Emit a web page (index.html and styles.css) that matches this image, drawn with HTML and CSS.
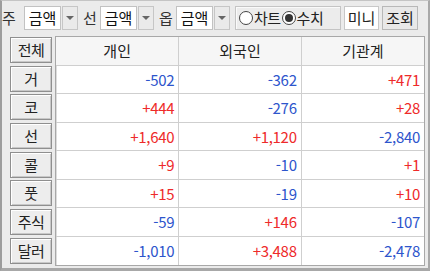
FILE: index.html
```html
<!DOCTYPE html>
<html lang="ko">
<head>
<meta charset="utf-8">
<link rel="stylesheet" href="styles.css">
</head>
<body>
<div class="win">
  <div class="toolbar">
    <span class="lbl first">주</span>
    <span class="combo"><span class="val">금액</span><span class="drop"><i></i></span></span>
    <span class="lbl">선</span>
    <span class="combo"><span class="val">금액</span><span class="drop"><i></i></span></span>
    <span class="lbl">옵</span>
    <span class="combo"><span class="val">금액</span><span class="drop"><i></i></span></span>
    <span class="radios">
      <span class="radio"></span><span class="rtext">차트</span>
      <span class="radio on"></span><span class="rtext">수치</span>
    </span>
    <span class="btn white">미니</span>
    <span class="btn">조회</span>
  </div>
  <div class="main">
    <div class="side">
      <span class="sbtn">전체</span>
      <span class="sbtn">거</span>
      <span class="sbtn">코</span>
      <span class="sbtn">선</span>
      <span class="sbtn">콜</span>
      <span class="sbtn">풋</span>
      <span class="sbtn">주식</span>
      <span class="sbtn">달러</span>
    </div>
    <div class="grid">
      <div class="row head"><span>개인</span><span>외국인</span><span>기관계</span></div>
      <div class="row"><span class="dn">-502</span><span class="dn">-362</span><span class="up">+471</span></div>
      <div class="row"><span class="up">+444</span><span class="dn">-276</span><span class="up">+28</span></div>
      <div class="row"><span class="up">+1,640</span><span class="up">+1,120</span><span class="dn">-2,840</span></div>
      <div class="row"><span class="up">+9</span><span class="dn">-10</span><span class="up">+1</span></div>
      <div class="row"><span class="up">+15</span><span class="dn">-19</span><span class="up">+10</span></div>
      <div class="row"><span class="dn">-59</span><span class="up">+146</span><span class="dn">-107</span></div>
      <div class="row"><span class="dn">-1,010</span><span class="up">+3,488</span><span class="dn">-2,478</span></div>
    </div>
  </div>
</div>
</body>
</html>
```
FILE: styles.css
```css
* { box-sizing: border-box; }
html, body { margin: 0; padding: 0; }
body {
  width: 430px; height: 271px; overflow: hidden;
  background: #ebebeb;
  font-family: "Noto Sans CJK KR", "Noto Sans", sans-serif;
  font-size: 15px; color: #222;
}
.win {
  width: 430px; height: 271px;
  border-left: 2px solid #9c9c9c;
  border-top: 1px solid #c4c4c4;
  border-right: 2px solid #a8a8a8;
  border-bottom: 3px solid #a8a8a8;
  display: flex; flex-direction: column;
}
.toolbar {
  display: flex; align-items: center;
  height: 24px; margin-top: 5px;
}
.lbl {
  width: 17px; margin-left: 5px;
  font-size: 15px; color: #333; line-height: 24px; white-space: nowrap;
}
.lbl.first { width: 22px; margin-left: 0; }
.combo { display: flex; height: 24px; }
.val {
  width: 37px; height: 24px; background: #fff;
  border: 1px solid #c2c2c2;
  line-height: 22px; text-align: center; font-size: 15px; color: #111;
}
.drop {
  width: 16px; height: 24px; margin-left: 1px;
  background: #eaeaea; border: 1px solid #c6c6c6;
  display: flex; align-items: center; justify-content: center;
}
.drop i {
  width: 0; height: 0;
  border-left: 4px solid transparent; border-right: 4px solid transparent;
  border-top: 4px solid #666;
}
.radios {
  display: flex; align-items: center;
  width: 106px; height: 24px; margin-left: 5px; padding: 0 0 0 3px;
  border: 1px solid #c4c4c4; background: #ececec;
  box-shadow: inset 1px 1px 0 #fafafa;
}
.radio {
  width: 14px; height: 14px; border-radius: 50%; flex: none;
  border: 1px solid #444; background: #fff; position: relative;
}
.radio.on::after {
  content: ""; position: absolute; left: 2px; top: 2px;
  width: 8px; height: 8px; border-radius: 50%; background: #333;
}
.rtext { margin: 0 1px 0 1px; font-size: 15px; line-height: 22px; letter-spacing: -0.5px; }
.btn {
  height: 24px; width: 36px; margin-left: 3px;
  border: 1px solid #b8b8b8; background: #e8e8e8;
  text-align: center; line-height: 22px; font-size: 15px;
}
.btn.white { width: 35px; background: #fff; border-color: #c8c8c8; }
.main { display: flex; margin-top: 6px; flex: 1; }
.side {
  width: 53px; padding: 1px 0 0 8px;
  display: flex; flex-direction: column; gap: 2.7px;
}
.sbtn {
  height: 26px; width: 42px;
  background: #ededed;
  border: 1px solid #8f8f8f;
  box-shadow: inset 1px 1px 0 #fff, inset -1px -1px 0 #c8c8c8;
  text-align: center; line-height: 24px; font-size: 15px; color: #222;
  letter-spacing: -0.5px;
}
.grid {
  width: 370px; height: 230px;
  border: 1px solid #a8a8a8;
  box-shadow: inset 1px 1px 0 #dcdcdc;
  background: #fff;
  display: flex; flex-direction: column;
}
.row { display: flex; height: 28.5px; border-bottom: 1px solid #cfcfcf; }
.row:last-child { border-bottom: none; }
.row span {
  width: 123px; border-right: 1px solid #cfcfcf;
  text-align: right; padding-right: 4px;
  line-height: 27px; font-size: 15px; letter-spacing: -0.3px;
}
.row span:first-child { width: 124px; }
.row span:last-child { border-right: none; }
.row.head { background: #f6f6f6; }
.row.head span { text-align: center; padding-right: 0; color: #222; letter-spacing: 0; }
.up { color: #ee2a2a; }
.dn { color: #2d55cc; }
```
